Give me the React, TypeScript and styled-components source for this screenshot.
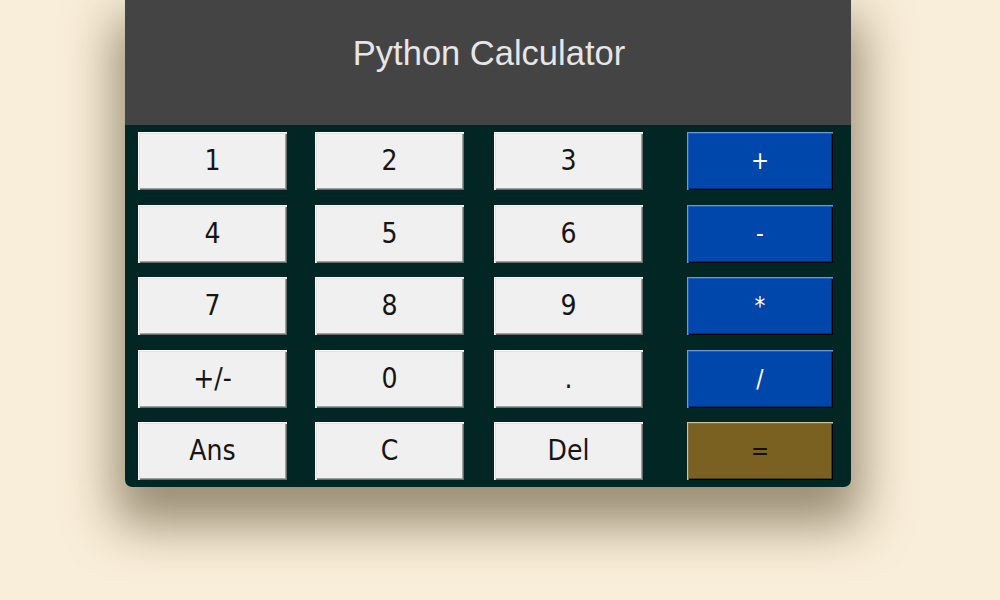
import React from "react";
import styled, { createGlobalStyle, css } from "styled-components";

const Global = createGlobalStyle`
  html, body { margin: 0; padding: 0; }
  body {
    background: #f9eed9;
    width: 1000px;
    height: 600px;
    overflow: hidden;
  }
`;

const Page = styled.div`
  width: 1000px;
  height: 600px;
  padding-left: 125px;
  box-sizing: border-box;
`;

const Window = styled.div`
  width: 726px;
  border-radius: 0 0 7px 7px;
  overflow: hidden;
  box-shadow: 0 28px 50px 10px rgba(60, 45, 15, 0.5);
`;

const Header = styled.div`
  height: 125px;
  background: #444444;
  display: flex;
  justify-content: center;
  align-items: flex-start;
  padding-top: 36px;
  box-sizing: border-box;
`;

const Title = styled.h1`
  margin: 0;
  font-family: "Liberation Sans", Arial, sans-serif;
  font-weight: 400;
  font-size: 34.5px;
  line-height: 34px;
  color: #e6e6e6;
  padding-left: 2px;
`;

const Pad = styled.div`
  background: #012623;
  padding: 7px 0 7px 13px;
  display: grid;
  grid-template-columns: 177px 179px 193px 146px;
  grid-auto-rows: 58px;
  row-gap: 14.5px;
`;

type Variant = "num" | "op" | "eq";

const variants = {
  num: css`
    width: 149px;
    background: #f0f0f0;
    color: #151515;
    font-size: 28px;
    box-shadow: inset 1px 1px 0 #ffffff, inset 2px 2px 0 #e3e3e3,
      inset -1px -1px 0 #696969, inset -2px -2px 0 #a0a0a0;
  `,
  op: css`
    width: 146px;
    background: #0047ab;
    color: #ffffff;
    font-size: 24px;
    box-shadow: inset 1px 1px 0 #6d98df, inset 2px 2px 0 #1d5cbb,
      inset -1px -1px 0 #000000, inset -2px -2px 0 #00306f;
  `,
  eq: css`
    width: 146px;
    background: #7a6121;
    color: #111;
    font-size: 24px;
    box-shadow: inset 1px 1px 0 #cfc5a2, inset 2px 2px 0 #86703a,
      inset -1px -1px 0 #000000, inset -2px -2px 0 #4a3b12;
  `,
};

const Key = styled.button<{ $v: Variant }>`
  height: 58px;
  border: none;
  padding: 0;
  margin: 0;
  display: flex;
  align-items: center;
  justify-content: center;
  font-family: "DejaVu Sans Condensed", "DejaVu Sans", sans-serif;
  font-stretch: condensed;
  line-height: 1;
  cursor: pointer;
  ${(p) => variants[p.$v]}
`;

const rows: [string, string, string, string][] = [
  ["1", "2", "3", "+"],
  ["4", "5", "6", "-"],
  ["7", "8", "9", "*"],
  ["+/-", "0", ".", "/"],
  ["Ans", "C", "Del", "="],
];

export default function App() {
  return (
    <>
      <Global />
      <Page>
        <Window>
          <Header>
            <Title>Python Calculator</Title>
          </Header>
          <Pad>
            {rows.map((r) =>
              r.map((k, i) => (
                <Key key={k} $v={i < 3 ? "num" : k === "=" ? "eq" : "op"}>
                  {k}
                </Key>
              ))
            )}
          </Pad>
        </Window>
      </Page>
    </>
  );
}
